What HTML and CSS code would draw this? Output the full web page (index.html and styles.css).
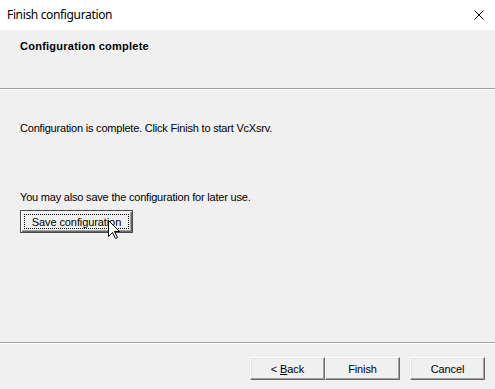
FILE: index.html
```html
<!DOCTYPE html>
<html lang="en">
<head>
    <meta charset="UTF-8">
    <title>Finish configuration</title>
    <link rel="stylesheet" href="styles.css">
</head>
<body>
    <div class="window">
        <div class="titlebar">
            <span class="title">Finish configuration</span>
            <svg class="close" width="10" height="10" viewBox="0 0 10 10">
                <path d="M0.5 0.5 L9.5 9.5 M9.5 0.5 L0.5 9.5" stroke="#000" stroke-width="1"/>
            </svg>
        </div>

        <div class="header">
            <h1>Configuration complete</h1>
        </div>
        <div class="sep"></div>

        <div class="content">
            <p class="line-first">Configuration is complete. Click Finish to start VcXsrv.</p>
            <p class="line-second">You may also save the configuration for later use.</p>
            <div class="save-wrap">
                <button class="btn default"><span class="focus">Save configuration</span></button>
                <!-- mouse pointer over the button -->
                <svg class="cursor" width="13" height="20" viewBox="0 0 13 20">
                    <path d="M0.5 0.5 L0.5 16.5 L4.5 12.5 L7.5 18.5 L9.5 17.5 L6.5 11.5 L11.5 11.5 Z" fill="#fff" stroke="#000" stroke-width="1" stroke-linejoin="miter"/>
                </svg>
            </div>
        </div>
        <div class="sep"></div>

        <div class="footer">
            <button class="btn">&lt; <u>B</u>ack</button>
            <button class="btn">Finish</button>
            <button class="btn cancel">Cancel</button>
        </div>
    </div>
</body>
</html>
```

FILE: styles.css
```css
html, body {
    margin: 0;
    padding: 0;
}
body {
    background-color: #f0f0f0;
    font-family: "Liberation Sans", Arial, sans-serif;
    font-size: 11px;
    color: #000;
}
.window {
    width: 495px;
    height: 389px;
    display: flex;
    flex-direction: column;
}
.titlebar {
    height: 30px;
    background-color: #fff;
    display: flex;
    align-items: center;
    justify-content: space-between;
    padding: 0 11px 0 7px;
    box-sizing: border-box;
}
.title {
    font-family: "Noto Sans", "Open Sans", sans-serif;
    font-size: 12px;
    letter-spacing: -0.35px;
    margin-top: -1px;
}
.close {
    display: block;
}
.header {
    height: 58px;
    padding: 10px 0 0 20px;
    box-sizing: border-box;
}
.header h1 {
    margin: 0;
    font-size: 11px;
    font-weight: bold;
    line-height: 13px;
    letter-spacing: 0.25px;
}
.sep {
    height: 1px;
    border-top: 1px solid #a0a0a0;
    background-color: #fff;
}
.content {
    height: 252px;
    padding: 32px 0 0 20px;
    box-sizing: border-box;
}
.content p {
    margin: 0;
    line-height: 13px;
    letter-spacing: -0.2px;
}
.line-second {
    margin-top: 56px !important;
}
.save-wrap {
    position: relative;
    margin-top: 6px;
    width: 140px;
}
.btn {
    font-family: "Liberation Sans", Arial, sans-serif;
    font-size: 11px;
    letter-spacing: -0.1px;
    color: #000;
    background-color: #f0f0f0;
    width: 75px;
    height: 23px;
    padding: 0;
    margin: 0;
    border: 1px solid;
    border-color: #fff #696969 #696969 #fff;
    box-shadow: inset -1px -1px #a0a0a0, inset 1px 1px #e3e3e3;
    box-sizing: border-box;
}
.btn.default {
    width: 113px;
    height: 23px;
    border: 1px solid #4a4a4a;
    box-shadow: inset 1px 1px #fff, inset -1px -1px #696969, inset -2px -2px #a0a0a0;
    padding: 3px;
    display: flex;
}
.focus {
    flex: 1;
    border: 1px dotted #000;
    display: flex;
    align-items: center;
    justify-content: center;
}
.cursor {
    position: absolute;
    left: 88px;
    top: 10px;
}
.footer {
    flex: 1;
    display: flex;
    align-items: flex-start;
    padding: 13px 0 0 250px;
    box-sizing: border-box;
}
.cancel {
    margin-left: 10px;
}
```
